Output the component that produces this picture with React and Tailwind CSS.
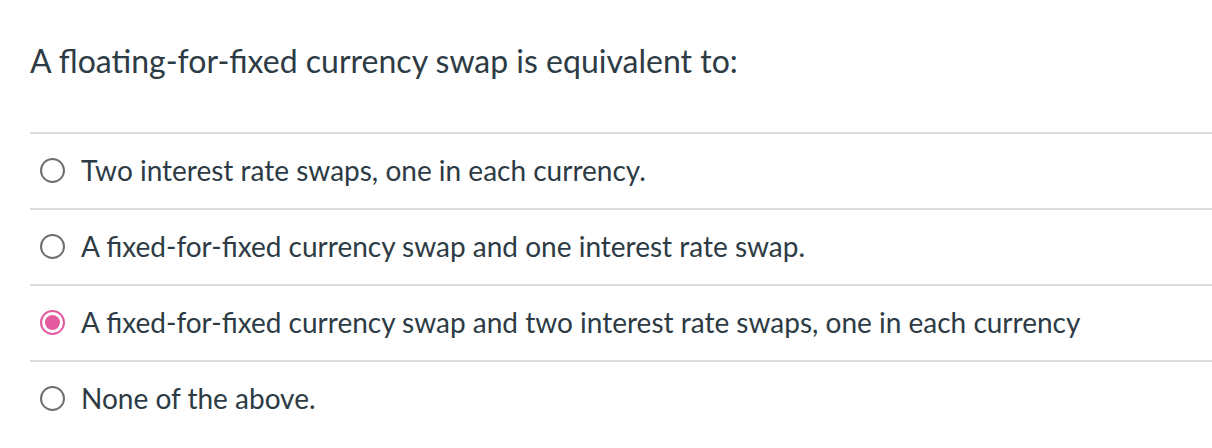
const options = [
  { id: 'a', label: 'Two interest rate swaps, one in each currency.' },
  { id: 'b', label: 'A fixed-for-fixed currency swap and one interest rate swap.' },
  { id: 'c', label: 'A fixed-for-fixed currency swap and two interest rate swaps, one in each currency', selected: true },
  { id: 'd', label: 'None of the above.' },
];

const Radio = ({ checked }) =>
  checked ? (
    <span className="flex h-[25px] w-[25px] shrink-0 items-center justify-center rounded-full border-2 border-[#e35a9e] bg-white">
      <span className="h-[15px] w-[15px] rounded-full bg-[#e35a9e]" />
    </span>
  ) : (
    <span className="h-[25px] w-[25px] shrink-0 rounded-full border-2 border-[#6f6f6f] bg-white" />
  );

export default function App() {
  return (
    <div className="min-h-screen bg-white pl-[30px] text-[#2d3b45]" style={{ fontFamily: 'Lato, "Noto Sans", sans-serif' }}>
      <div className="flex h-[132px] items-center pb-[10px]">
        <p className="text-[32px] leading-[40px]">A floating-for-fixed currency swap is equivalent to:</p>
      </div>
      <div>
        {options.map((opt) => (
          <label key={opt.id} className="flex h-[76px] items-center gap-[16px] border-t-2 border-[#dcdcdc] pl-[10px] pb-[2px]">
            <Radio checked={opt.selected} />
            <span className="text-[28px] leading-[34px]">{opt.label}</span>
          </label>
        ))}
      </div>
    </div>
  );
}
